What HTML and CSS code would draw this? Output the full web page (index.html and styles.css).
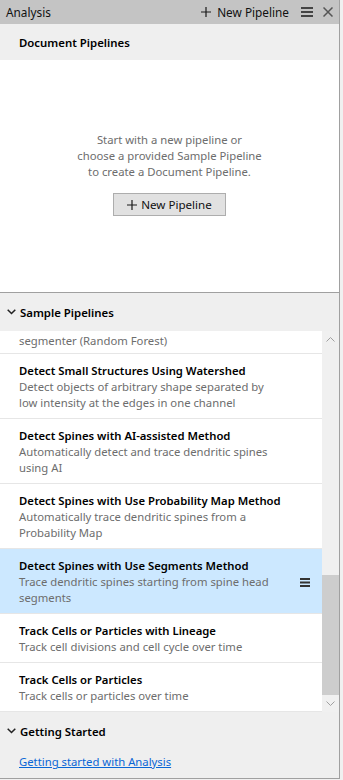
FILE: index.html
```html
<!DOCTYPE html>
<html lang="en">
<head>
    <meta charset="UTF-8">
    <meta name="viewport" content="width=device-width, initial-scale=1.0">
    <title>Analysis</title>
    <link rel="stylesheet" href="styles.css">
</head>
<body>
    <div class="panel">
        <!-- panel title bar -->
        <div class="titlebar">
            <span class="titlebar-name">Analysis</span>
            <div class="titlebar-actions">
                <span class="titlebar-new">
                    <svg class="plus" width="10" height="10" viewBox="0 0 10 10"><path d="M5 0v10M0 5h10" stroke="#1a1a1a" stroke-width="1.2"/></svg>
                    New Pipeline
                </span>
                <svg class="icon-menu" width="12" height="10" viewBox="0 0 12 10"><path d="M0 1h12M0 5h12M0 9h12" stroke="#444" stroke-width="2"/></svg>
                <svg class="icon-close" width="10" height="10" viewBox="0 0 10 10"><path d="M0.5 0.5l9 9M9.5 0.5l-9 9" stroke="#555" stroke-width="1.5"/></svg>
            </div>
        </div>

        <div class="section-head doc-head">Document Pipelines</div>

        <div class="empty">
            <p>Start with a new pipeline or<br>choose a provided Sample Pipeline<br>to create a Document Pipeline.</p>
            <button class="btn">
                <svg width="10" height="10" viewBox="0 0 10 10"><path d="M5 0v10M0 5h10" stroke="#1a1a1a" stroke-width="1.2"/></svg>
                New Pipeline
            </button>
        </div>

        <div class="section-head">
            <svg class="chevron" width="9" height="6" viewBox="0 0 9 6"><path d="M0.7 0.7l3.8 3.8 3.8-3.8" fill="none" stroke="#222" stroke-width="1.5"/></svg>
            <span>Sample Pipelines</span>
        </div>

        <div class="samples">
            <div class="sample-list">
                <!-- list is scrolled: only the tail of the first entry shows -->
                <div class="sample-item cut">
                    <div class="sample-desc">segmenter (Random Forest)</div>
                </div>
                <div class="sample-item">
                    <div class="sample-title">Detect Small Structures Using Watershed</div>
                    <div class="sample-desc">Detect objects of arbitrary shape separated by low intensity at the edges in one channel</div>
                </div>
                <div class="sample-item">
                    <div class="sample-title">Detect Spines with AI-assisted Method</div>
                    <div class="sample-desc">Automatically detect and trace dendritic spines using AI</div>
                </div>
                <div class="sample-item">
                    <div class="sample-title">Detect Spines with Use Probability Map Method</div>
                    <div class="sample-desc">Automatically trace dendritic spines from a Probability Map</div>
                </div>
                <div class="sample-item selected">
                    <div class="sample-title">Detect Spines with Use Segments Method</div>
                    <div class="sample-desc">Trace dendritic spines starting from spine head segments</div>
                    <svg class="item-menu" width="10" height="9" viewBox="0 0 10 9"><path d="M0 1h10M0 4.5h10M0 8h10" stroke="#333" stroke-width="1.8"/></svg>
                </div>
                <div class="sample-item">
                    <div class="sample-title">Track Cells or Particles with Lineage</div>
                    <div class="sample-desc">Track cell divisions and cell cycle over time</div>
                </div>
                <div class="sample-item">
                    <div class="sample-title">Track Cells or Particles</div>
                    <div class="sample-desc">Track cells or particles over time</div>
                </div>
            </div>
            <div class="scrollbar">
                <div class="scroll-arrow">
                    <svg width="9" height="5" viewBox="0 0 9 5"><path d="M0.5 4.5l4-4 4 4" fill="none" stroke="#a0a0a0" stroke-width="1"/></svg>
                </div>
                <div class="scroll-track">
                    <div class="scroll-thumb"></div>
                </div>
                <div class="scroll-arrow">
                    <svg width="9" height="5" viewBox="0 0 9 5"><path d="M0.5 0.5l4 4 4-4" fill="none" stroke="#a0a0a0" stroke-width="1"/></svg>
                </div>
            </div>
        </div>

        <div class="section-head">
            <svg class="chevron" width="9" height="6" viewBox="0 0 9 6"><path d="M0.7 0.7l3.8 3.8 3.8-3.8" fill="none" stroke="#222" stroke-width="1.5"/></svg>
            <span>Getting Started</span>
        </div>
        <div class="links">
            <a href="#">Getting started with Analysis</a>
        </div>
    </div>
</body>
</html>
```

FILE: styles.css
```css
body {
    margin: 0;
    background-color: #f0f0f0;
    font-family: 'Noto Sans', sans-serif;
    font-size: 11.3px;
    color: #000;
}

.panel {
    width: 339px;
    height: 778px;
    display: flex;
    flex-direction: column;
    background-color: #efefef;
    border-right: 1px solid #a0a0a0;
    border-bottom: 1px solid #a0a0a0;
    overflow: hidden;
}

.titlebar {
    height: 24px;
    flex-shrink: 0;
    display: flex;
    align-items: center;
    padding-left: 6px;
    background-color: #c4c4c4;
    font-size: 11.8px;
    color: #111;
}

.titlebar-actions {
    margin-left: auto;
    display: flex;
    align-items: center;
}

.titlebar-new {
    display: flex;
    align-items: center;
    gap: 6px;
    margin-right: 12px;
}

.icon-menu {
    margin-right: 10px;
}

.icon-close {
    margin-right: 6px;
}

.section-head {
    height: 38px;
    flex-shrink: 0;
    display: flex;
    align-items: center;
    padding-left: 7px;
    font-weight: 600;
    font-size: 11.4px;
}

.section-head .chevron {
    margin-right: 4px;
}

.doc-head {
    height: 36px;
    padding-left: 19px;
}

.empty {
    height: 232px;
    flex-shrink: 0;
    background-color: #fff;
    border-bottom: 1px solid #a0a0a0;
    display: flex;
    flex-direction: column;
    align-items: center;
    color: #6d6d6d;
}

.empty p {
    margin: 72px 0 0;
    line-height: 16px;
    text-align: center;
}

.btn {
    margin-top: 13px;
    width: 113px;
    height: 23px;
    display: flex;
    align-items: center;
    justify-content: center;
    gap: 4px;
    background-color: #e1e1e1;
    border: 1px solid #adadad;
    font-family: inherit;
    font-size: 11.6px;
    color: #111;
    padding: 0;
}

.samples {
    height: 381px;
    flex-shrink: 0;
    display: flex;
}

.sample-list {
    flex: 1;
    background-color: #fff;
    overflow: hidden;
}

.sample-item {
    position: relative;
    padding: 9px 0 7px 19px;
    border-bottom: 1px solid #e6e6e6;
    line-height: 16px;
}

.sample-item.cut {
    padding-top: 2px;
    padding-bottom: 4px;
}

.sample-item.selected {
    background-color: #cce8ff;
}

.sample-title {
    font-weight: 600;
}

.sample-desc {
    width: 264px;
    color: #6d6d6d;
}

.item-menu {
    position: absolute;
    right: 12px;
    top: 29px;
}

.scrollbar {
    width: 17px;
    display: flex;
    flex-direction: column;
    background-color: #f0f0f0;
}

.scroll-arrow {
    height: 17px;
    display: flex;
    align-items: center;
    justify-content: center;
}

.scroll-track {
    flex: 1;
    display: flex;
    flex-direction: column;
    justify-content: flex-end;
}

.scroll-thumb {
    height: 120px;
    background-color: #cdcdcd;
}

.links {
    padding: 4px 0 0 19px;
}

.links a {
    color: #0a66d6;
}
```
